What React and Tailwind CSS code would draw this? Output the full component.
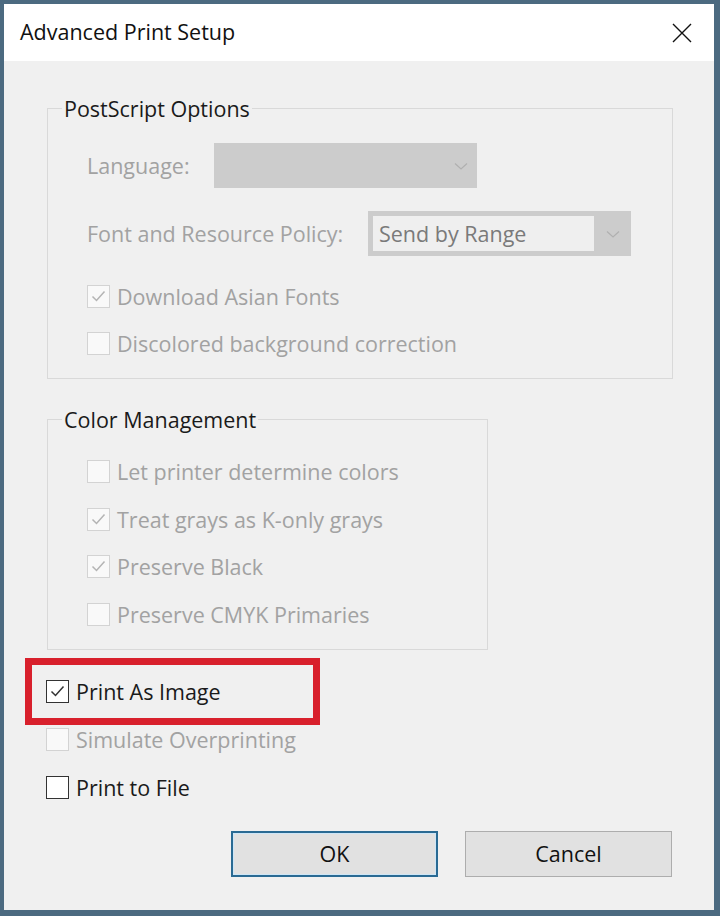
import React from 'react';

const FONT = { fontFamily: '"Open Sans", "Noto Sans", sans-serif' };

function Check({ checked, disabled }) {
  const border = disabled ? 'border-[#d3d3d3]' : 'border-[#333333]';
  const bg = disabled ? 'bg-[#f9f9f9]' : 'bg-white';
  const stroke = disabled ? '#b4b4b4' : '#333333';
  return (
    <div className={`w-[23px] h-[23px] border ${border} ${bg} flex items-center justify-center shrink-0`}>
      {checked && (
        <svg width="17" height="17" viewBox="0 0 17 17" fill="none">
          <path d="M2.5 8.5 L6.5 12.5 L14.5 3.5" stroke={stroke} strokeWidth="1.5" />
        </svg>
      )}
    </div>
  );
}

function CheckRow({ label, checked, disabled }) {
  return (
    <div className="flex items-center gap-[7px] h-[27px]">
      <Check checked={checked} disabled={disabled} />
      <span className={disabled ? 'text-[#a2a2a2]' : 'text-[#1a1a1a]'}>{label}</span>
    </div>
  );
}

function Chevron({ color = '#b8b8b8' }) {
  return (
    <svg width="16" height="10" viewBox="0 0 16 10" fill="none">
      <path d="M2 2.5 L8 8 L14 2.5" stroke={color} strokeWidth="1.2" />
    </svg>
  );
}

function GroupBox({ title, width, children }) {
  return (
    <fieldset className="border border-[#d9d9d9] px-[14px] pb-[21px] ml-[43px]" style={{ width }}>
      <legend className="px-[2px] text-[#1a1a1a]">{title}</legend>
      <div className="pl-[25px]">{children}</div>
    </fieldset>
  );
}

export default function App() {
  return (
    <div className="w-[720px] h-[916px] bg-[#4c6a80] pt-[4px] pl-[4px] pr-[6px] pb-[6px]" style={FONT}>
      <div className="w-full h-full flex flex-col bg-white">
        {/* Title bar */}
        <div className="h-[57px] flex items-center justify-between pl-[16px] pr-[22px] shrink-0">
          <span className="text-[21.5px] text-[#111]">Advanced Print Setup</span>
          <svg width="20" height="20" viewBox="0 0 20 20" fill="none">
            <path d="M1 1 L19 19 M19 1 L1 19" stroke="#111" strokeWidth="1.4" />
          </svg>
        </div>

        {/* Body */}
        <div className="flex-1 bg-[#f0f0f0] text-[21.5px] leading-[27px] pt-[34px]">
          <GroupBox title="PostScript Options" width="626px">
            <div className="pt-[21px] flex flex-col">
              <div className="flex items-center h-[45px]">
                <span className="w-[127px] text-[#a2a2a2]">Language:</span>
                <div className="w-[263px] h-[45px] bg-[#cccccc] flex items-center justify-end pr-[8px]">
                  <Chevron color="#b0b0b0" />
                </div>
              </div>
              <div className="flex items-center h-[45px] mt-[23px]">
                <span className="w-[281px] text-[#a2a2a2] whitespace-nowrap">Font and Resource Policy:</span>
                <div className="w-[263px] h-[45px] bg-[#cccccc] flex items-stretch p-[5px] pr-0">
                  <div className="flex-1 bg-[#efefef] flex items-center pl-[6px] text-[#7a7a7a]">Send by Range</div>
                  <div className="w-[37px] flex items-center justify-center">
                    <Chevron color="#b0b0b0" />
                  </div>
                </div>
              </div>
              <div className="mt-[27px] flex flex-col gap-[20px]">
                <CheckRow label="Download Asian Fonts" checked disabled />
                <CheckRow label="Discolored background correction" disabled />
              </div>
            </div>
          </GroupBox>

          <div className="mt-[27px]">
            <GroupBox title="Color Management" width="441px">
              <div className="pt-[25px] flex flex-col gap-[20.5px]">
                <CheckRow label="Let printer determine colors" disabled />
                <CheckRow label="Treat grays as K-only grays" checked disabled />
                <CheckRow label="Preserve Black" checked disabled />
                <CheckRow label="Preserve CMYK Primaries" disabled />
              </div>
            </GroupBox>
          </div>

          <div className="mt-[28px] ml-[42px] flex flex-col gap-[21px]">
            <div className="relative">
              <CheckRow label="Print As Image" checked />
              <div className="absolute left-[-21px] top-[-20px] w-[295px] h-[67px] border-[7px] border-[#d8202c]" />
            </div>
            <CheckRow label="Simulate Overprinting" disabled />
            <CheckRow label="Print to File" />
          </div>

          <div className="mt-[30px] flex justify-end gap-[27px] pr-[42px]">
            <button className="w-[207px] h-[46px] border-2 border-[#2a6a93] bg-[#e1e1e1] text-[#111] shadow-[inset_0_0_0_1px_#cde6f7]">OK</button>
            <button className="w-[207px] h-[46px] border border-[#adadad] bg-[#e1e1e1] text-[#111]">Cancel</button>
          </div>
        </div>
      </div>
    </div>
  );
}
